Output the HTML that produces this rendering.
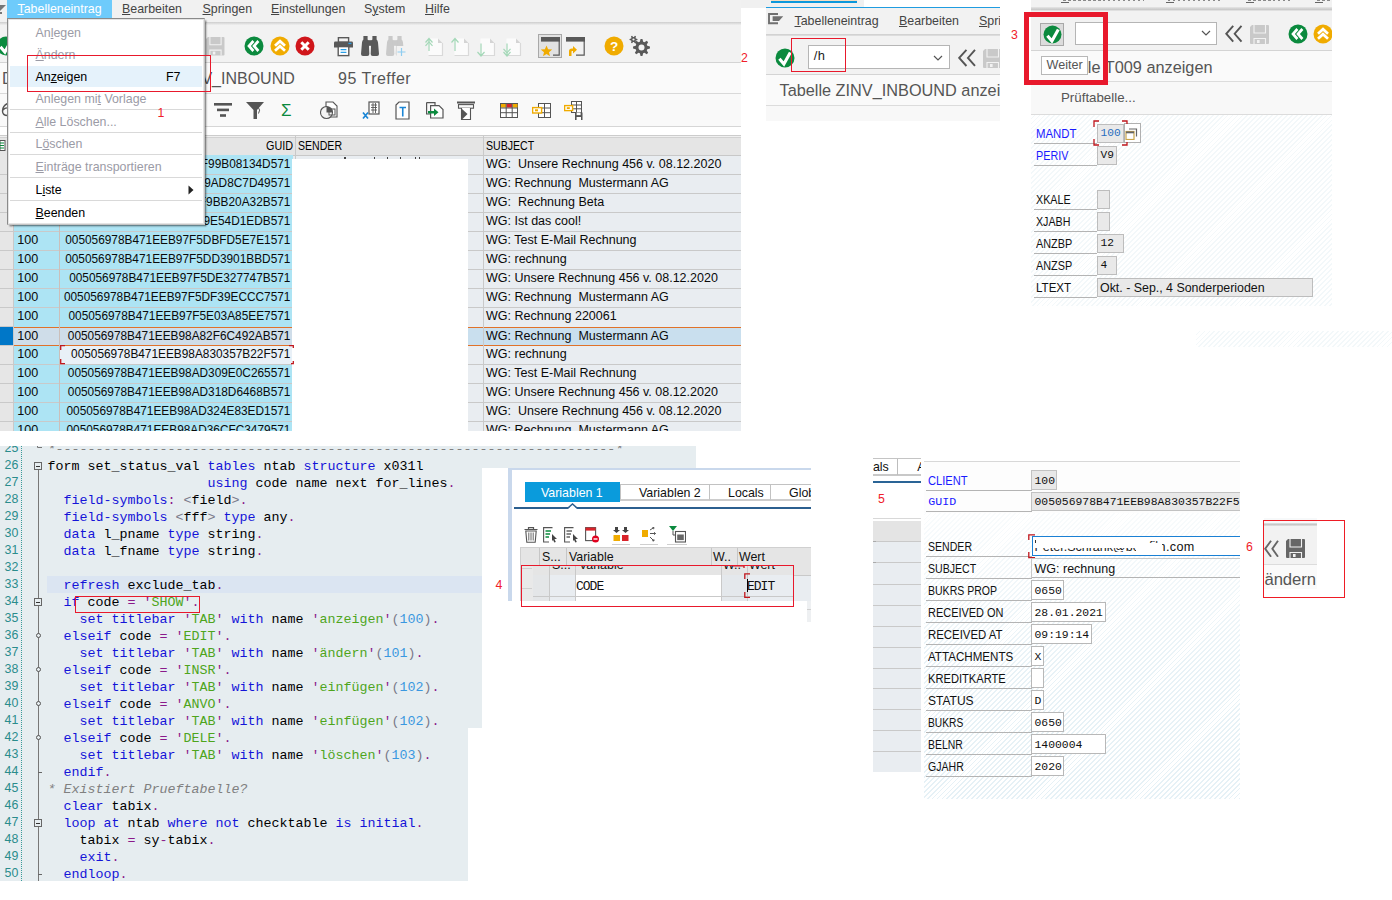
<!DOCTYPE html>
<html><head><meta charset="utf-8"><title>SAP</title>
<style>
html,body{margin:0;padding:0}
body{width:1392px;height:900px;position:relative;overflow:hidden;background:#fff;font-family:"Liberation Sans", sans-serif;}
div,span,svg{position:absolute}
.p{overflow:hidden}
.t{white-space:pre;display:block}
u{text-decoration:underline;text-underline-offset:1px;text-decoration-thickness:1px}
</style></head><body>
<div class="p" style="left:0px;top:0px;width:741px;height:431px;background:#f2f2f2;">
<div style="left:0px;top:0px;width:741px;height:22.2px;background:#f1f1f1;"></div>
<div style="left:0px;top:22.2px;width:741px;height:3px;background:linear-gradient(#cdcdcd,#dedede 50%,#efefef);"></div>
<div style="left:7px;top:0px;width:105px;height:18px;background:#6ecbfb;"></div>
<span class="t" style="left:17.5px;top:1.0px;font-size:12.4px;line-height:16px;color:#fff;"><u>T</u>abelleneintrag</span>
<span class="t" style="left:122px;top:1.0px;font-size:12.4px;line-height:16px;color:#444;"><u>B</u>earbeiten</span>
<span class="t" style="left:202.5px;top:1.0px;font-size:12.4px;line-height:16px;color:#444;"><u>S</u>pringen</span>
<span class="t" style="left:271px;top:1.0px;font-size:12.4px;line-height:16px;color:#444;"><u>E</u>instellungen</span>
<span class="t" style="left:364px;top:1.0px;font-size:12.4px;line-height:16px;color:#444;">S<u>y</u>stem</span>
<span class="t" style="left:425px;top:1.0px;font-size:12.4px;line-height:16px;color:#444;"><u>H</u>ilfe</span>
<svg style="left:0px;top:2px" width="7" height="12" viewBox="0 0 7 12"><path d="M0 3 H6 L0 9 Z" fill="#777"/><rect x="0" y="10" width="2" height="2" fill="#777"/></svg>
<div style="left:0px;top:25px;width:741px;height:37px;background:#f2f2f2;"></div>
<div style="left:0px;top:62px;width:741px;height:1px;background:#d4d4d4"></div>
<svg style="left:-4.0px;top:36.0px" width="20.0" height="20.0" viewBox="0 0 20.0 20.0"><circle cx="10.0" cy="10.0" r="9.5" fill="#0b8a3e"/><path d="M4.4 10.8 L8.9 16 L15.3 4.6" fill="none" stroke="#fff" stroke-width="3.1" stroke-linejoin="miter"/></svg>
<svg style="left:206.4px;top:37.3px" width="18.5" height="18.5" viewBox="0 0 18.5 18.5"><g transform="scale(0.9736842105263158)"><path d="M2 0 H18 Q19 0 19 1 V18 Q19 19 18 19 H1 Q0 19 0 18 V2 Z" fill="#c9c9c9"/><path d="M4 0 V8 H15.5 V0 M4 19 V13.5 H15.5 V19" fill="none" stroke="#f2f2f2" stroke-width="1.1"/><rect x="7" y="15" width="2.6" height="3" fill="#f2f2f2"/></g></svg>
<svg style="left:243.5px;top:36.0px" width="20.0" height="20.0" viewBox="0 0 20.0 20.0"><circle cx="10.0" cy="10.0" r="9.5" fill="#0b8a3e"/><path d="M9.4 5 L5 10 L9.4 15 M14.4 5 L10 10 L14.4 15" fill="none" stroke="#fff" stroke-width="2.7"/></svg>
<svg style="left:270.0px;top:36.0px" width="20.0" height="20.0" viewBox="0 0 20.0 20.0"><circle cx="10.0" cy="10.0" r="9.5" fill="#f0ab00"/><path d="M5 9.8 L10 5.2 L15 9.8 M5 14.8 L10 10.2 L15 14.8" fill="none" stroke="#fff" stroke-width="2.7"/></svg>
<svg style="left:295.3px;top:36.0px" width="20.0" height="20.0" viewBox="0 0 20.0 20.0"><circle cx="10.0" cy="10.0" r="9.5" fill="#d0161b"/><path d="M6.3 6.3 L13.7 13.7 M13.7 6.3 L6.3 13.7" fill="none" stroke="#fff" stroke-width="3"/></svg>
<svg style="left:334px;top:36.5px" width="19" height="20" viewBox="0 0 19 20"><rect x="4.4" y="0.7" width="10.2" height="4.6" fill="#f2f2f2" stroke="#595959" stroke-width="1.4"/><path d="M1.2 4.6 H17.8 Q19 4.6 19 5.8 V10.6 H0 V5.8 Q0 4.6 1.2 4.6 Z" fill="#595959"/><rect x="14.4" y="5.8" width="3" height="1.3" fill="#2aa0e8"/><rect x="4.2" y="9.6" width="10.6" height="9" fill="#fff" stroke="#595959" stroke-width="1.4"/><path d="M6.6 12.6 H12.4 M6.6 15.3 H12.4" stroke="#2aa0e8" stroke-width="1.2"/></svg>
<svg style="left:360.5px;top:36px" width="20" height="21" viewBox="0 0 20 21"><path d="M2.4 0 H6.6 V3.6 Q7.6 4.2 7.8 6 L8.3 18 Q8.3 20 6.3 20 H2 Q0 20 0 18 L1 6.5 Q1.2 4.4 2.4 3.6 Z" fill="#595959"/><path d="M15.6 0 H11.4 V3.6 Q10.4 4.2 10.2 6 L9.7 18 Q9.7 20 11.7 20 H16 Q18 20 18 18 L17 6.5 Q16.8 4.4 15.6 3.6 Z" fill="#595959"/><rect x="6.6" y="4.2" width="4.8" height="5.6" fill="#595959"/></svg>
<svg style="left:386px;top:36px" width="20" height="21" viewBox="0 0 20 21"><path d="M2.4 0 H6.6 V3.6 Q7.6 4.2 7.8 6 L8.3 18 Q8.3 20 6.3 20 H2 Q0 20 0 18 L1 6.5 Q1.2 4.4 2.4 3.6 Z" fill="#c9c9c9"/><path d="M15.6 0 H11.4 V3.6 Q10.4 4.2 10.2 6 L9.7 18 Q9.7 20 11.7 20 H16 Q18 20 18 18 L17 6.5 Q16.8 4.4 15.6 3.6 Z" fill="#c9c9c9"/><rect x="6.6" y="4.2" width="4.8" height="5.6" fill="#c9c9c9"/><rect x="10.5" y="10" width="10" height="11" fill="#f2f2f2"/><path d="M15.5 12 V20 M11.5 16 H19.5" stroke="#8fcdf0" stroke-width="1.2"/></svg>
<svg style="left:424.5px;top:36.5px" width="19" height="21" viewBox="0 0 19 21"><path d="M3.5 1.5 H13.0 L17.5 6 V18.5 H3.5 Z" fill="#fbfbfb"/><path d="M17.5 6 V18.5 H3.5" fill="none" stroke="#d9d9d9" stroke-width="1.2"/><path d="M13.0 1.5 L17.5 6 H13.0 Z" fill="#d4d4d4"/><path d="M4 14 V1.5 M0.5 5.5 L4 1.5 L7.5 5.5" fill="none" stroke="#a4d8b8" stroke-width="1.2"/><path d="M0.5 8.8 L4 4.8 L7.5 8.8" fill="none" stroke="#a4d8b8" stroke-width="1.2"/></svg>
<svg style="left:450.5px;top:36.5px" width="19" height="21" viewBox="0 0 19 21"><path d="M3.5 1.5 H13.0 L17.5 6 V18.5 H3.5 Z" fill="#fbfbfb"/><path d="M17.5 6 V18.5 H3.5" fill="none" stroke="#d9d9d9" stroke-width="1.2"/><path d="M13.0 1.5 L17.5 6 H13.0 Z" fill="#d4d4d4"/><path d="M4 14 V1.5 M0.5 5.5 L4 1.5 L7.5 5.5" fill="none" stroke="#a4d8b8" stroke-width="1.2"/></svg>
<svg style="left:476.5px;top:36.5px" width="19" height="21" viewBox="0 0 19 21"><path d="M3.5 1.5 H13.0 L17.5 6 V18.5 H3.5 Z" fill="#fbfbfb"/><path d="M17.5 6 V18.5 H3.5" fill="none" stroke="#d9d9d9" stroke-width="1.2"/><path d="M13.0 1.5 L17.5 6 H13.0 Z" fill="#d4d4d4"/><path d="M4 6.5 V19 M0.5 15 L4 19 L7.5 15" fill="none" stroke="#a4d8b8" stroke-width="1.2"/></svg>
<svg style="left:502.5px;top:36.5px" width="19" height="21" viewBox="0 0 19 21"><path d="M3.5 1.5 H13.0 L17.5 6 V18.5 H3.5 Z" fill="#fbfbfb"/><path d="M17.5 6 V18.5 H3.5" fill="none" stroke="#d9d9d9" stroke-width="1.2"/><path d="M13.0 1.5 L17.5 6 H13.0 Z" fill="#d4d4d4"/><path d="M4 6.5 V19 M0.5 15 L4 19 L7.5 15" fill="none" stroke="#a4d8b8" stroke-width="1.2"/><path d="M0.5 11.8 L4 15.8 L7.5 11.8" fill="none" stroke="#a4d8b8" stroke-width="1.2"/></svg>
<div style="left:538px;top:34px;width:24px;height:23.5px;background:#e2e2e2;border:1px solid #a8a8a8;box-sizing:border-box;"></div>
<svg style="left:540.5px;top:36.5px" width="19" height="19" viewBox="0 0 19 19"><path d="M0.8 0.8 H18.2 V18.2 H12" fill="none" stroke="#595959" stroke-width="1.2"/><rect x="0" y="0" width="19" height="4.6" fill="#595959"/><path d="M5.5 8.5 L7.1 12.3 L11.2 12.6 L8 15.2 L9 19.2 L5.5 17 L2 19.2 L3 15.2 L-0.2 12.6 L3.9 12.3 Z" fill="#f0ab00"/></svg>
<svg style="left:566px;top:36.5px" width="19" height="19" viewBox="0 0 19 19"><path d="M0.8 0.8 H18.2 V18.2 H10" fill="none" stroke="#595959" stroke-width="1.2"/><rect x="0" y="0" width="19" height="4.6" fill="#595959"/><path d="M3 19 V14 Q3 11.5 6 11.5 H7 V9 L11 12.8 L7 16.5 V14 H6 Q5.5 14 5.5 15 V19 Z" fill="#f0ab00"/></svg>
<svg style="left:604.0px;top:36.0px" width="20.0" height="20.0" viewBox="0 0 20.0 20.0"><circle cx="10.0" cy="10.0" r="9.5" fill="#f0ab00"/><text x="10" y="14.6" font-family="Liberation Sans" font-weight="bold" font-size="13.5" fill="#fff" text-anchor="middle">?</text></svg>
<svg style="left:629px;top:35px" width="22" height="22" viewBox="0 0 22 22"><path d="M20.95 11.57 L20.95 13.43 L18.26 14.17 L17.76 15.39 L19.13 17.81 L17.81 19.13 L15.39 17.76 L14.17 18.26 L13.43 20.95 L11.57 20.95 L10.83 18.26 L9.61 17.76 L7.19 19.13 L5.87 17.81 L7.24 15.39 L6.74 14.17 L4.05 13.43 L4.05 11.57 L6.74 10.83 L7.24 9.61 L5.87 7.19 L7.19 5.87 L9.61 7.24 L10.83 6.74 L11.57 4.05 L13.43 4.05 L14.17 6.74 L15.39 7.24 L17.81 5.87 L19.13 7.19 L17.76 9.61 L18.26 10.83Z" fill="#595959"/><circle cx="12.5" cy="12.5" r="3" fill="#f2f2f2"/><path d="M8.46 3.92 L8.46 5.08 L6.92 5.46 L6.54 6.11 L6.98 7.63 L5.97 8.22 L4.88 7.07 L4.12 7.07 L3.03 8.22 L2.02 7.63 L2.46 6.11 L2.08 5.46 L0.54 5.08 L0.54 3.92 L2.08 3.54 L2.46 2.89 L2.02 1.37 L3.03 0.78 L4.12 1.93 L4.88 1.93 L5.97 0.78 L6.98 1.37 L6.54 2.89 L6.92 3.54Z" fill="#595959"/><circle cx="4.5" cy="4.5" r="1.1" fill="#f2f2f2"/></svg>
<div style="left:0px;top:63px;width:741px;height:30px;background:#fafafa;"></div>
<div style="left:0px;top:93px;width:741px;height:1px;background:#d9d9d9"></div>
<span class="t" style="left:2px;top:69.0px;font-size:16px;line-height:20px;color:#555;">D</span>
<span class="t" style="left:201.4px;top:69.0px;font-size:16px;line-height:20px;color:#555;">V_INBOUND</span>
<span class="t" style="left:338px;top:69.0px;font-size:16px;line-height:20px;color:#555;letter-spacing:0.5px">95 Treffer</span>
<div style="left:0px;top:94px;width:741px;height:32px;background:#f9f9f9;"></div>
<div style="left:0px;top:126px;width:741px;height:1px;background:#d6d6d6"></div>
<div style="left:0px;top:127px;width:741px;height:9px;background:#fff;"></div>
<svg style="left:1px;top:102px" width="8" height="16" viewBox="0 0 8 16"><path d="M6.5 1.5 Q1.5 4 1.5 9 Q1.5 13.5 6.5 13.5 M2 8 Q4 5.5 7 6" fill="none" stroke="#555" stroke-width="1.4"/></svg>
<svg style="left:214px;top:102px" width="18" height="16" viewBox="0 0 18 16"><rect x="0" y="1" width="18" height="2.6" fill="#555"/><rect x="3" y="6.6" width="12" height="2.6" fill="#555"/><rect x="6" y="12.2" width="6" height="2.6" fill="#555"/></svg>
<svg style="left:246px;top:101px" width="19" height="19" viewBox="0 0 19 19"><path d="M0 1 H18 L11 9 V18 H7.5 V9 Z" fill="#555"/><path d="M12 6 Q15 9 12.5 12.5" fill="none" stroke="#555" stroke-width="1"/></svg>
<span class="t" style="left:281px;top:100.5px;font-size:17px;line-height:20px;color:#0b8a3e;">Σ</span>
<svg style="left:320px;top:101px" width="18" height="19" viewBox="0 0 18 19"><path d="M6 1 H13 L17 5 V16 H6 Z" fill="#fff" stroke="#555" stroke-width="1.1"/><circle cx="6.5" cy="11.5" r="6" fill="#f4f4f4" stroke="#555" stroke-width="1.1"/><path d="M6.5 11.5 V5.5 A6 6 0 0 1 12.5 11.5 Z" fill="#555"/><rect x="9" y="8" width="6" height="6" fill="none" stroke="#555" stroke-width="1"/></svg>
<svg style="left:362px;top:101px" width="18" height="19" viewBox="0 0 18 19"><rect x="7" y="1" width="10" height="12" fill="#fff" stroke="#555" stroke-width="1.2"/><path d="M9 4 H15 M9 6.5 H15 M9 9 H15 M11 2 V12 M13.5 2 V12" stroke="#555" stroke-width="0.9"/><path d="M1 11.5 L6 17.5 M6 11.5 L1 17.5" stroke="#1b86d6" stroke-width="1.7"/></svg>
<svg style="left:395px;top:101px" width="15" height="19" viewBox="0 0 15 19"><path d="M1 4 L4 1 H14 V18 H1 Z" fill="#fff" stroke="#555" stroke-width="1.2"/><path d="M4.5 6.5 H11 M7.75 6.5 V15.5" stroke="#1b86d6" stroke-width="1.6" fill="none"/></svg>
<svg style="left:426px;top:102px" width="18" height="17" viewBox="0 0 18 17"><path d="M0.6 0.6 H9 V3 M0.6 0.6 V12 H4" fill="none" stroke="#555" stroke-width="1.2"/><path d="M4.6 3.6 H13 L17 7.6 V16 H4.6 Z" fill="#fff" stroke="#555" stroke-width="1.2"/><path d="M2 9 H8 V6.5 L12.5 10.2 L8 14 V11.5 H2 Z" fill="#0b8a3e"/></svg>
<svg style="left:457px;top:101px" width="18" height="19" viewBox="0 0 18 19"><rect x="0" y="0.5" width="18" height="2" fill="#555"/><rect x="1.5" y="3.6" width="15" height="3.6" fill="none" stroke="#555" stroke-width="1.1"/><path d="M4.5 7 V18.5 H13.5 V7" fill="#fff" stroke="#555" stroke-width="1.1"/><path d="M5 8 L10.5 13 L5 18.5 Z" fill="#555"/></svg>
<svg style="left:500px;top:102.5px" width="18" height="15" viewBox="0 0 18 15"><rect x="0.5" y="0.5" width="17" height="14" fill="#fff" stroke="#555" stroke-width="1"/><rect x="1" y="1" width="5" height="3.6" fill="#f0ab00"/><rect x="6.5" y="1" width="5.5" height="3.6" fill="#d8232a"/><rect x="12.5" y="1" width="5" height="3.6" fill="#f0ab00"/><path d="M0.5 5 H17.5 M0.5 9.7 H17.5 M6.2 0.5 V14.5 M12.2 0.5 V14.5" stroke="#555" stroke-width="1"/></svg>
<svg style="left:532px;top:102.5px" width="19" height="15" viewBox="0 0 19 15"><rect x="6.5" y="0.5" width="12" height="14" fill="#fff" stroke="#555" stroke-width="1"/><path d="M6.5 5 H18.5 M6.5 9.7 H18.5 M12.5 0.5 V14.5" stroke="#555" stroke-width="1"/><rect x="0.6" y="4.6" width="9" height="5.4" fill="#fff" stroke="#f0ab00" stroke-width="1.4"/><rect x="3" y="6.3" width="3" height="2" fill="#f0ab00"/></svg>
<svg style="left:564px;top:101px" width="19" height="19" viewBox="0 0 19 19"><rect x="7.5" y="0.5" width="10" height="11" fill="#fff" stroke="#555" stroke-width="1"/><path d="M7.5 4 H17.5 M7.5 7.8 H17.5 M12.5 0.5 V11.5" stroke="#555" stroke-width="1"/><rect x="0.6" y="4.6" width="8" height="5" fill="#fff" stroke="#f0ab00" stroke-width="1.4"/><rect x="2.8" y="6.2" width="3" height="1.8" fill="#f0ab00"/><rect x="11" y="11.5" width="7.5" height="7.5" fill="#555"/><rect x="12.6" y="11.5" width="4" height="2.6" fill="#fff"/><rect x="12.6" y="16" width="4.4" height="3" fill="#fff"/></svg>
<div style="left:0px;top:136px;width:741px;height:295px;background:#e9edf1;"></div>
<div style="left:0px;top:135px;width:741px;height:20px;background:#e5e5e5;"></div>
<div style="left:0px;top:135px;width:741px;height:1px;background:#cccccc"></div>
<div style="left:0px;top:136px;width:741px;height:1px;background:#f0f0f0"></div>
<div style="left:0px;top:137px;width:741px;height:1px;background:#d2d2d2"></div>
<div style="left:0px;top:155px;width:741px;height:1px;background:#c8c8c8"></div>
<div style="left:0px;top:155px;width:14px;height:276px;background:#e6e6e6;"></div>
<div style="left:14px;top:155px;width:46px;height:276px;background:#ade4f4;"></div>
<div style="left:60px;top:155px;width:233px;height:276px;background:#ade4f4;"></div>
<div style="left:14px;top:327px;width:727px;height:18.5px;background:#c9dfee;"></div>
<div style="left:14px;top:327px;width:279px;height:18.5px;background:#cfdde9;"></div>
<div style="left:0px;top:327px;width:13px;height:18.5px;background:#0077c8;"></div>
<div style="left:60px;top:346px;width:233px;height:18px;background:#e9f0f7;"></div>
<div style="left:0px;top:174px;width:741px;height:1px;background:#c9c9c9"></div>
<div style="left:0px;top:193px;width:741px;height:1px;background:#c9c9c9"></div>
<div style="left:0px;top:212px;width:741px;height:1px;background:#c9c9c9"></div>
<div style="left:0px;top:231px;width:741px;height:1px;background:#c9c9c9"></div>
<div style="left:0px;top:250px;width:741px;height:1px;background:#c9c9c9"></div>
<div style="left:0px;top:269px;width:741px;height:1px;background:#c9c9c9"></div>
<div style="left:0px;top:288px;width:741px;height:1px;background:#c9c9c9"></div>
<div style="left:0px;top:307px;width:741px;height:1px;background:#c9c9c9"></div>
<div style="left:0px;top:364px;width:741px;height:1px;background:#c9c9c9"></div>
<div style="left:0px;top:383px;width:741px;height:1px;background:#c9c9c9"></div>
<div style="left:0px;top:402px;width:741px;height:1px;background:#c9c9c9"></div>
<div style="left:0px;top:421px;width:741px;height:1px;background:#c9c9c9"></div>
<div style="left:14px;top:326.8px;width:727px;height:1.1px;background:#e0722a"></div>
<div style="left:14px;top:344.8px;width:727px;height:1.1px;background:#e0722a"></div>
<div style="left:0px;top:326px;width:14px;height:1px;background:#c9c9c9"></div>
<div style="left:0px;top:345px;width:14px;height:1px;background:#c9c9c9"></div>
<div style="left:13px;top:136px;width:1px;height:295px;background:#c9c9c9"></div>
<div style="left:59.3px;top:136px;width:1px;height:295px;background:#cbbfba"></div>
<div style="left:294.5px;top:136px;width:1px;height:295px;background:#c9c9c9"></div>
<div style="left:482.5px;top:136px;width:1px;height:295px;background:#c9c9c9"></div>
<svg style="left:0px;top:140px" width="7" height="12" viewBox="0 0 7 12"><rect x="0" y="0.5" width="5" height="10" fill="#fff" stroke="#555" stroke-width="1"/><path d="M0 3 H4 M0 5.5 H4 M0 8 H4" stroke="#0b8a3e" stroke-width="1.2"/></svg>
<span class="t" style="left:265.5px;top:138.3px;font-size:12px;line-height:16px;color:#000;transform:scaleX(0.900);transform-origin:0 0;">GUID</span>
<span class="t" style="left:298px;top:138.3px;font-size:12px;line-height:16px;color:#000;transform:scaleX(0.880);transform-origin:0 0;">SENDER</span>
<span class="t" style="left:486px;top:138.3px;font-size:12px;line-height:16px;color:#000;transform:scaleX(0.882);transform-origin:0 0;">SUBJECT</span>
<span class="t" style="left:17.3px;top:156.4px;font-size:12.6px;line-height:16px;color:#0a0a0a;">100</span>
<span class="t" style="right:450.6px;top:156.4px;font-size:11.85px;line-height:16px;color:#0a0a0a;">005056978B471EEB97FF99B08134D571</span>
<span class="t" style="left:486px;top:156.4px;font-size:12.5px;line-height:16px;color:#0a0a0a;">WG:  Unsere Rechnung 456 v. 08.12.2020</span>
<span class="t" style="left:17.3px;top:175.4px;font-size:12.6px;line-height:16px;color:#0a0a0a;">100</span>
<span class="t" style="right:450.6px;top:175.4px;font-size:11.85px;line-height:16px;color:#0a0a0a;">005056978B471EEB97F59AD8C7D49571</span>
<span class="t" style="left:486px;top:175.4px;font-size:12.5px;line-height:16px;color:#0a0a0a;">WG: Rechnung  Mustermann AG</span>
<span class="t" style="left:17.3px;top:194.4px;font-size:12.6px;line-height:16px;color:#0a0a0a;">100</span>
<span class="t" style="right:450.6px;top:194.4px;font-size:11.85px;line-height:16px;color:#0a0a0a;">005056978B471EEB97FF9BB20A32B571</span>
<span class="t" style="left:486px;top:194.4px;font-size:12.5px;line-height:16px;color:#0a0a0a;">WG:  Rechnung Beta</span>
<span class="t" style="left:17.3px;top:213.4px;font-size:12.6px;line-height:16px;color:#0a0a0a;">100</span>
<span class="t" style="right:450.6px;top:213.4px;font-size:11.85px;line-height:16px;color:#0a0a0a;">005056978B471EEB97F59E54D1EDB571</span>
<span class="t" style="left:486px;top:213.4px;font-size:12.5px;line-height:16px;color:#0a0a0a;">WG: Ist das cool!</span>
<span class="t" style="left:17.3px;top:232.4px;font-size:12.6px;line-height:16px;color:#0a0a0a;">100</span>
<span class="t" style="right:450.6px;top:232.4px;font-size:11.85px;line-height:16px;color:#0a0a0a;">005056978B471EEB97F5DBFD5E7E1571</span>
<span class="t" style="left:486px;top:232.4px;font-size:12.5px;line-height:16px;color:#0a0a0a;">WG: Test E-Mail Rechnung</span>
<span class="t" style="left:17.3px;top:251.39999999999998px;font-size:12.6px;line-height:16px;color:#0a0a0a;">100</span>
<span class="t" style="right:450.6px;top:251.39999999999998px;font-size:11.85px;line-height:16px;color:#0a0a0a;">005056978B471EEB97F5DD3901BBD571</span>
<span class="t" style="left:486px;top:251.39999999999998px;font-size:12.5px;line-height:16px;color:#0a0a0a;">WG: rechnung</span>
<span class="t" style="left:17.3px;top:270.4px;font-size:12.6px;line-height:16px;color:#0a0a0a;">100</span>
<span class="t" style="right:450.6px;top:270.4px;font-size:11.85px;line-height:16px;color:#0a0a0a;">005056978B471EEB97F5DE327747B571</span>
<span class="t" style="left:486px;top:270.4px;font-size:12.5px;line-height:16px;color:#0a0a0a;">WG: Unsere Rechnung 456 v. 08.12.2020</span>
<span class="t" style="left:17.3px;top:289.4px;font-size:12.6px;line-height:16px;color:#0a0a0a;">100</span>
<span class="t" style="right:450.6px;top:289.4px;font-size:11.85px;line-height:16px;color:#0a0a0a;">005056978B471EEB97F5DF39ECCC7571</span>
<span class="t" style="left:486px;top:289.4px;font-size:12.5px;line-height:16px;color:#0a0a0a;">WG: Rechnung  Mustermann AG</span>
<span class="t" style="left:17.3px;top:308.4px;font-size:12.6px;line-height:16px;color:#0a0a0a;">100</span>
<span class="t" style="right:450.6px;top:308.4px;font-size:11.85px;line-height:16px;color:#0a0a0a;">005056978B471EEB97F5E03A85EE7571</span>
<span class="t" style="left:486px;top:308.4px;font-size:12.5px;line-height:16px;color:#0a0a0a;">WG: Rechnung 220061</span>
<span class="t" style="left:17.3px;top:328.0px;font-size:12.6px;line-height:16px;color:#0a0a0a;">100</span>
<span class="t" style="right:450.6px;top:328.0px;font-size:11.85px;line-height:16px;color:#0a0a0a;">005056978B471EEB98A82F6C492AB571</span>
<span class="t" style="left:486px;top:328.0px;font-size:12.5px;line-height:16px;color:#0a0a0a;">WG: Rechnung  Mustermann AG</span>
<span class="t" style="left:17.3px;top:346.4px;font-size:12.6px;line-height:16px;color:#0a0a0a;">100</span>
<span class="t" style="right:450.6px;top:346.4px;font-size:11.85px;line-height:16px;color:#0a0a0a;">005056978B471EEB98A830357B22F571</span>
<span class="t" style="left:486px;top:346.4px;font-size:12.5px;line-height:16px;color:#0a0a0a;">WG: rechnung</span>
<span class="t" style="left:17.3px;top:365.4px;font-size:12.6px;line-height:16px;color:#0a0a0a;">100</span>
<span class="t" style="right:450.6px;top:365.4px;font-size:11.85px;line-height:16px;color:#0a0a0a;">005056978B471EEB98AD309E0C265571</span>
<span class="t" style="left:486px;top:365.4px;font-size:12.5px;line-height:16px;color:#0a0a0a;">WG: Test E-Mail Rechnung</span>
<span class="t" style="left:17.3px;top:384.4px;font-size:12.6px;line-height:16px;color:#0a0a0a;">100</span>
<span class="t" style="right:450.6px;top:384.4px;font-size:11.85px;line-height:16px;color:#0a0a0a;">005056978B471EEB98AD318D6468B571</span>
<span class="t" style="left:486px;top:384.4px;font-size:12.5px;line-height:16px;color:#0a0a0a;">WG: Unsere Rechnung 456 v. 08.12.2020</span>
<span class="t" style="left:17.3px;top:403.4px;font-size:12.6px;line-height:16px;color:#0a0a0a;">100</span>
<span class="t" style="right:450.6px;top:403.4px;font-size:11.85px;line-height:16px;color:#0a0a0a;">005056978B471EEB98AD324E83ED1571</span>
<span class="t" style="left:486px;top:403.4px;font-size:12.5px;line-height:16px;color:#0a0a0a;">WG:  Unsere Rechnung 456 v. 08.12.2020</span>
<span class="t" style="left:17.3px;top:422.4px;font-size:12.6px;line-height:16px;color:#0a0a0a;">100</span>
<span class="t" style="right:450.6px;top:422.4px;font-size:11.85px;line-height:16px;color:#0a0a0a;">005056978B471EEB98AD36CFC3479571</span>
<span class="t" style="left:486px;top:422.4px;font-size:12.5px;line-height:16px;color:#0a0a0a;">WG: Rechnung  Mustermann AG</span>
<div style="left:292px;top:159px;width:176px;height:272px;background:#fff;"></div>
<div style="left:344.4px;top:157.2px;width:1.2px;height:1.8px;background:#444;"></div>
<div style="left:373.7px;top:157.2px;width:1.2px;height:1.8px;background:#444;"></div>
<div style="left:387px;top:157.2px;width:1.2px;height:1.8px;background:#444;"></div>
<div style="left:400px;top:157.2px;width:1.2px;height:1.8px;background:#444;"></div>
<div style="left:415px;top:157.2px;width:1.2px;height:1.8px;background:#444;"></div>
<div style="left:419px;top:157.2px;width:1.2px;height:1.8px;background:#444;"></div>
<svg style="left:60px;top:345px" width="234" height="20" viewBox="0 0 234 20"><path d="M0.7 5 V0.7 H5 M0.7 14 V18.6 H5 M229 0.7 H233.3 V3 M233.3 16 V18.6 H231" fill="none" stroke="#c0161c" stroke-width="1.3"/></svg>
<div style="left:7px;top:18.2px;width:197.6px;height:206.6px;background:#fff;border:1px solid #8a8a8a;border-right-color:#c4c4c4;border-bottom-color:#c4c4c4;box-sizing:border-box;box-shadow:2.2px 2.2px 1.6px rgba(0,0,0,.42)"></div>
<div style="left:8px;top:19.2px;width:195.6px;height:204.6px;border:1px solid #e4e4e4;box-sizing:border-box;"></div>
<div style="left:10px;top:65.5px;width:192px;height:21px;background:#e5f2fb;"></div>
<span class="t" style="left:35.5px;top:24.5px;font-size:12.4px;line-height:16px;color:#9b9ba6;">An<u>l</u>egen</span>
<span class="t" style="left:35.5px;top:46.5px;font-size:12.4px;line-height:16px;color:#9b9ba6;"><u>Ä</u>ndern</span>
<span class="t" style="left:35.5px;top:68.5px;font-size:12.4px;line-height:16px;color:#000;">An<u>z</u>eigen</span>
<span class="t" style="left:166px;top:68.5px;font-size:12.4px;line-height:16px;color:#000;">F7</span>
<span class="t" style="left:35.5px;top:90.5px;font-size:12.4px;line-height:16px;color:#9b9ba6;">Anlegen mi<u>t</u> Vorlage</span>
<span class="t" style="left:35.5px;top:113.5px;font-size:12.4px;line-height:16px;color:#9b9ba6;"><u>A</u>lle Löschen...</span>
<span class="t" style="left:35.5px;top:135.5px;font-size:12.4px;line-height:16px;color:#9b9ba6;">L<u>ö</u>schen</span>
<span class="t" style="left:35.5px;top:158.5px;font-size:12.4px;line-height:16px;color:#9b9ba6;"><u>E</u>inträge transportieren</span>
<span class="t" style="left:35.5px;top:181.5px;font-size:12.4px;line-height:16px;color:#000;">L<u>i</u>ste</span>
<span class="t" style="left:35.5px;top:204.5px;font-size:12.4px;line-height:16px;color:#000;"><u>B</u>eenden</span>
<div style="left:10px;top:109px;width:192px;height:1px;background:#d9d9d9"></div>
<div style="left:10px;top:132px;width:192px;height:1px;background:#d9d9d9"></div>
<div style="left:10px;top:154px;width:192px;height:1px;background:#d9d9d9"></div>
<div style="left:10px;top:177px;width:192px;height:1px;background:#d9d9d9"></div>
<div style="left:10px;top:200px;width:192px;height:1px;background:#d9d9d9"></div>
<svg style="left:188px;top:185px" width="6" height="10" viewBox="0 0 6 10"><path d="M0.5 0.5 L5.5 5 L0.5 9.5 Z" fill="#222"/></svg>
<div style="left:27px;top:54.8px;width:184.3px;height:37.6px;border:1px solid #e8192c;box-sizing:border-box;"></div>
<span class="t" style="left:157.5px;top:104.5px;font-size:12.3px;line-height:16px;color:#f0202a;">1</span>
</div>
<span class="t" style="left:741px;top:50.0px;font-size:12.3px;line-height:16px;color:#f0202a;">2</span>
<div style="left:741px;top:0px;width:26px;height:7.5px;background:#f0f0f0;"></div>
<div class="p" style="left:766px;top:0px;width:234px;height:120.5px;background:#fafafa;">
<div style="left:0px;top:0px;width:234px;height:7.2px;background:#fff;"></div>
<div style="left:0px;top:0px;width:98px;height:7.5px;background:#f0f0f0;"></div>
<div style="left:4.8px;top:0px;width:86.2px;height:0.9px;background:#f3dcc0;"></div>
<div style="left:4.8px;top:0.8px;width:86.2px;height:2.4px;background:#0a97db;"></div>
<div style="left:0px;top:7.1px;width:234px;height:1px;background:#1f9ce0"></div>
<div style="left:0px;top:8.1px;width:234px;height:25.7px;background:#f2f2f2;"></div>
<div style="left:0px;top:33.7px;width:234px;height:3px;background:linear-gradient(#cdcdcd,#dcdcdc 50%,#eeeeee);"></div>
<svg style="left:2px;top:13px" width="16" height="12" viewBox="0 0 16 12"><path d="M10 1 H1 V10.2 H10" fill="none" stroke="#707070" stroke-width="1.9"/><path d="M4.6 3.2 H15.2 L11 8 H4.6 Z" fill="#707070"/></svg>
<span class="t" style="left:28.5px;top:12.5px;font-size:12.4px;line-height:16px;color:#444;"><u>T</u>abelleneintrag</span>
<span class="t" style="left:133px;top:12.5px;font-size:12.4px;line-height:16px;color:#444;"><u>B</u>earbeiten</span>
<span class="t" style="left:213px;top:12.5px;font-size:12.4px;line-height:16px;color:#444;"><u>S</u>pringen</span>
<div style="left:0px;top:36px;width:234px;height:38px;background:#f2f2f2;"></div>
<div style="left:0px;top:74px;width:234px;height:1px;background:#d4d4d4"></div>
<svg style="left:8.600000000000001px;top:47.9px" width="20.0" height="20.0" viewBox="0 0 20.0 20.0"><circle cx="10.0" cy="10.0" r="9.5" fill="#0b8a3e"/><path d="M4.4 10.8 L8.9 16 L15.3 4.6" fill="none" stroke="#fff" stroke-width="3.1" stroke-linejoin="miter"/></svg>
<div style="left:42px;top:45px;width:142px;height:23.6px;background:#fff;border:1px solid #b5b5b5;box-sizing:border-box;"></div>
<span class="t" style="left:47.8px;top:47.3px;font-size:12.9px;line-height:18px;color:#222;letter-spacing:0.4px">/h</span>
<svg style="left:167px;top:54.5px" width="10" height="6" viewBox="0 0 10 6"><path d="M1 1 L5 5 L9 1" fill="none" stroke="#555" stroke-width="1.2"/></svg>
<svg style="left:192px;top:49.3px" width="18" height="17.8" viewBox="0 0 18 17.8"><path d="M8.459999999999999 0.8 L1.2 8.9 L8.459999999999999 17.0 M17 0.8 L9.940000000000001 8.9 L17 17.0" fill="none" stroke="#555" stroke-width="1.9"/></svg>
<svg style="left:217px;top:49px" width="19" height="19" viewBox="0 0 19 19"><g transform="scale(1.0)"><path d="M2 0 H18 Q19 0 19 1 V18 Q19 19 18 19 H1 Q0 19 0 18 V2 Z" fill="#c9c9c9"/><path d="M4 0 V8 H15.5 V0 M4 19 V13.5 H15.5 V19" fill="none" stroke="#f2f2f2" stroke-width="1.1"/><rect x="7" y="15" width="2.6" height="3" fill="#f2f2f2"/></g></svg>
<div style="left:0px;top:75px;width:234px;height:30px;background:#fafafa;"></div>
<div style="left:0px;top:105px;width:234px;height:1px;background:#dcdcdc"></div>
<span class="t" style="left:13.5px;top:79.8px;font-size:16.3px;line-height:20px;color:#555;">Tabelle ZINV_INBOUND anzeigen</span>
<div style="left:0px;top:106px;width:234px;height:15px;background:#f8f8f8;"></div>
<div style="left:25px;top:38px;width:54.5px;height:33.5px;border:1px solid #e8192c;box-sizing:border-box;"></div>
</div>
<span class="t" style="left:1011px;top:26.5px;font-size:12.3px;line-height:16px;color:#f0202a;">3</span>
<div class="p" style="left:1031px;top:0px;width:301px;height:305.5px;background:#fafafa;">
<div style="left:0px;top:0px;width:301px;height:8px;background:#f2f2f2;"></div>
<div style="left:0px;top:7px;width:301px;height:4px;background:linear-gradient(#e6e6e6,#c8c8c8 60%,#ebebeb);"></div>
<div style="left:32px;top:0;width:80.5px;height:1.4px;background:repeating-linear-gradient(90deg,#8a8a8a 0,#8a8a8a 2.5px,transparent 2.5px,transparent 5px)"></div>
<div style="left:30px;top:1.8px;width:7.5px;height:1px;background:#666"></div>
<div style="left:137px;top:0;width:55px;height:1.4px;background:repeating-linear-gradient(90deg,#8a8a8a 0,#8a8a8a 2.5px,transparent 2.5px,transparent 5px)"></div>
<div style="left:135px;top:1.8px;width:7.5px;height:1px;background:#666"></div>
<div style="left:217px;top:0;width:44px;height:1.4px;background:repeating-linear-gradient(90deg,#8a8a8a 0,#8a8a8a 2.5px,transparent 2.5px,transparent 5px)"></div>
<div style="left:215px;top:1.8px;width:7.5px;height:1px;background:#666"></div>
<div style="left:286px;top:0;width:14px;height:1.4px;background:repeating-linear-gradient(90deg,#8a8a8a 0,#8a8a8a 2.5px,transparent 2.5px,transparent 5px)"></div>
<div style="left:284px;top:1.8px;width:7.5px;height:1px;background:#666"></div>
<div style="left:0px;top:11px;width:301px;height:39px;background:#f2f2f2;"></div>
<div style="left:0px;top:50px;width:301px;height:1px;background:#d4d4d4"></div>
<div style="left:9px;top:22.5px;width:24px;height:23px;background:#dcdcdc;border:1px solid #a8a8a8;box-sizing:border-box;"></div>
<svg style="left:11.5px;top:24.5px" width="19" height="19" viewBox="0 0 19 19"><circle cx="9.5" cy="9.5" r="9" fill="#0b8a3e"/><path d="M4.4 10.8 L8.9 16 L15.3 4.6" fill="none" stroke="#fff" stroke-width="3.1" stroke-linejoin="miter"/></svg>
<div style="left:44px;top:21.5px;width:141.5px;height:23px;background:#fff;border:1px solid #b5b5b5;box-sizing:border-box;"></div>
<svg style="left:169.5px;top:30px" width="10" height="6" viewBox="0 0 10 6"><path d="M1 1 L5 5 L9 1" fill="none" stroke="#555" stroke-width="1.2"/></svg>
<svg style="left:194px;top:25px" width="17.5" height="17.5" viewBox="0 0 17.5 17.5"><path d="M8.225 0.8 L1.2 8.75 L8.225 16.7 M16.5 0.8 L9.675 8.75 L16.5 16.7" fill="none" stroke="#555" stroke-width="1.9"/></svg>
<svg style="left:219px;top:25px" width="19" height="19" viewBox="0 0 19 19"><g transform="scale(1.0)"><path d="M2 0 H18 Q19 0 19 1 V18 Q19 19 18 19 H1 Q0 19 0 18 V2 Z" fill="#c9c9c9"/><path d="M4 0 V8 H15.5 V0 M4 19 V13.5 H15.5 V19" fill="none" stroke="#f2f2f2" stroke-width="1.1"/><rect x="7" y="15" width="2.6" height="3" fill="#f2f2f2"/></g></svg>
<svg style="left:256.5px;top:24.0px" width="20.0" height="20.0" viewBox="0 0 20.0 20.0"><circle cx="10.0" cy="10.0" r="9.5" fill="#0b8a3e"/><path d="M9.4 5 L5 10 L9.4 15 M14.4 5 L10 10 L14.4 15" fill="none" stroke="#fff" stroke-width="2.7"/></svg>
<svg style="left:282.0px;top:24.0px" width="20.0" height="20.0" viewBox="0 0 20.0 20.0"><circle cx="10.0" cy="10.0" r="9.5" fill="#f0ab00"/><path d="M5 9.8 L10 5.2 L15 9.8 M5 14.8 L10 10.2 L15 14.8" fill="none" stroke="#fff" stroke-width="2.7"/></svg>
<div style="left:0px;top:51px;width:301px;height:30px;background:#fafafa;"></div>
<div style="left:0px;top:81px;width:301px;height:1px;background:#dcdcdc"></div>
<span class="t" style="right:119.5px;top:57.2px;font-size:16.3px;line-height:20px;color:#555;">Tabelle T009 anzeigen</span>
<div style="left:10px;top:55.5px;width:47px;height:19px;background:#fff;border:1px solid #b8b8b8;box-sizing:border-box;"></div>
<span class="t" style="left:15.5px;top:57.0px;font-size:12.6px;line-height:16px;color:#555;">Weiter</span>
<div style="left:0px;top:82px;width:301px;height:32px;background:#f8f8f8;"></div>
<div style="left:0px;top:114px;width:301px;height:1px;background:#dcdcdc"></div>
<span class="t" style="left:30px;top:89.0px;font-size:13.3px;line-height:18px;color:#555;">Prüftabelle...</span>
<div style="left:0px;top:115px;width:301px;height:190.5px;background:repeating-linear-gradient(135deg,#ffffff 0,#ffffff 2.2px,#f3f8fa 2.2px,#f3f8fa 3.5px);"></div>
<span class="t" style="left:5px;top:125.5px;font-size:12.2px;line-height:16px;color:#1a1aff;transform:scaleX(0.934);transform-origin:0 0;">MANDT</span>
<div style="left:3px;top:142.5px;width:63px;height:1px;background:#b4b4b4"></div>
<div style="left:66px;top:124.0px;width:26.5px;height:19px;background:#e9e9e9;border:1px solid #bdbdbd;box-sizing:border-box;"></div>
<span class="t" style="left:69.5px;top:125.19999999999999px;font-size:11.2px;line-height:16px;color:#2a6fc0;font-family:'Liberation Mono', monospace;">100</span>
<span class="t" style="left:5px;top:147.5px;font-size:12.2px;line-height:16px;color:#1a1aff;transform:scaleX(0.885);transform-origin:0 0;">PERIV</span>
<div style="left:3px;top:164.5px;width:63px;height:1px;background:#b4b4b4"></div>
<div style="left:66px;top:146.0px;width:19.5px;height:19px;background:#e9e9e9;border:1px solid #bdbdbd;box-sizing:border-box;"></div>
<span class="t" style="left:69.5px;top:147.2px;font-size:11.2px;line-height:16px;color:#111;font-family:'Liberation Mono', monospace;">V9</span>
<span class="t" style="left:5px;top:191.5px;font-size:12.2px;line-height:16px;color:#111;transform:scaleX(0.880);transform-origin:0 0;">XKALE</span>
<div style="left:3px;top:208.5px;width:63px;height:1px;background:#b4b4b4"></div>
<div style="left:66px;top:190.0px;width:12.5px;height:19px;background:#e9e9e9;border:1px solid #bdbdbd;box-sizing:border-box;"></div>
<span class="t" style="left:5px;top:213.5px;font-size:12.2px;line-height:16px;color:#111;transform:scaleX(0.875);transform-origin:0 0;">XJABH</span>
<div style="left:3px;top:230.5px;width:63px;height:1px;background:#b4b4b4"></div>
<div style="left:66px;top:212.0px;width:12.5px;height:19px;background:#e9e9e9;border:1px solid #bdbdbd;box-sizing:border-box;"></div>
<span class="t" style="left:5px;top:235.5px;font-size:12.2px;line-height:16px;color:#111;transform:scaleX(0.892);transform-origin:0 0;">ANZBP</span>
<div style="left:3px;top:252.5px;width:63px;height:1px;background:#b4b4b4"></div>
<div style="left:66px;top:234.0px;width:26.5px;height:19px;background:#e9e9e9;border:1px solid #bdbdbd;box-sizing:border-box;"></div>
<span class="t" style="left:69.5px;top:235.2px;font-size:11.2px;line-height:16px;color:#111;font-family:'Liberation Mono', monospace;">12</span>
<span class="t" style="left:5px;top:257.5px;font-size:12.2px;line-height:16px;color:#111;transform:scaleX(0.892);transform-origin:0 0;">ANZSP</span>
<div style="left:3px;top:274.5px;width:63px;height:1px;background:#b4b4b4"></div>
<div style="left:66px;top:256.0px;width:19.5px;height:19px;background:#e9e9e9;border:1px solid #bdbdbd;box-sizing:border-box;"></div>
<span class="t" style="left:69.5px;top:257.2px;font-size:11.2px;line-height:16px;color:#111;font-family:'Liberation Mono', monospace;">4</span>
<span class="t" style="left:5px;top:279.5px;font-size:12.2px;line-height:16px;color:#111;transform:scaleX(0.950);transform-origin:0 0;">LTEXT</span>
<div style="left:3px;top:296.5px;width:63px;height:1px;background:#b4b4b4"></div>
<div style="left:66px;top:278.0px;width:215.5px;height:19px;background:#e9e9e9;border:1px solid #bdbdbd;box-sizing:border-box;"></div>
<span class="t" style="left:69px;top:279.5px;font-size:12.4px;line-height:16px;color:#111;">Okt. - Sep., 4 Sonderperioden</span>
<div style="left:93px;top:123px;width:17px;height:19.5px;background:#fff;border:1px solid #b0b0b0;box-sizing:border-box;"></div>
<svg style="left:94px;top:126px" width="14" height="14" viewBox="0 0 14 14"><path d="M4 3 H11.5 V10.5" fill="none" stroke="#666" stroke-width="1.2"/><rect x="1" y="5.5" width="8" height="8" fill="#fff" stroke="#caa64a" stroke-width="1.2"/><rect x="1" y="5.5" width="8" height="1.8" fill="#666"/></svg>
<svg style="left:62px;top:120px" width="36" height="26" viewBox="0 0 36 26"><path d="M1 7 V1 H6 M1 19 V25 H6 M29 1 H34 V4 M34 22 V25 H29" fill="none" stroke="#c0161c" stroke-width="1.3"/></svg>
<div style="left:-7px;top:12px;width:84px;height:72.5px;border:5px solid #e8192c;box-sizing:border-box;"></div>
</div>
<div style="left:1024px;top:12px;width:10px;height:72.5px;border:5px solid #e8192c;box-sizing:border-box;border-right:none;"></div>
<div style="left:1196px;top:331px;width:196px;height:16px;background:repeating-linear-gradient(135deg,#ffffff 0,#ffffff 2.2px,#f3f8fa 2.2px,#f3f8fa 3.5px);"></div>
<div style="left:0px;top:446px;width:695.5px;height:22px;background:#e6edf0;"></div>
<div style="left:0px;top:468px;width:482px;height:260px;background:#e6edf0;"></div>
<div style="left:0px;top:728px;width:468px;height:152.5px;background:#e6edf0;"></div>
<div class="p" style="left:0px;top:446px;width:695.5px;height:434.5px;background:transparent;">
<div style="left:47px;top:130px;width:435px;height:16.5px;background:#dbe5f2;"></div>
<div style="left:20.8px;top:0;width:0;height:435px;border-left:1px dotted #3a9a9a"></div>
<div style="left:37.5px;top:23.5px;width:1px;height:412.0px;background:#777"></div>
<span class="t" style="left:4.5px;top:-6.0px;font-size:12.4px;line-height:17px;color:#2a8c8c;">25</span>
<span class="t" style="left:47.5px;top:-5.5px;font-size:13.33px;line-height:17px;color:#000;font-family:'Liberation Mono', monospace;"><i style="color:#808080">*----------------------------------------------------------------------*</i></span>
<span class="t" style="left:4.5px;top:11.0px;font-size:12.4px;line-height:17px;color:#2a8c8c;">26</span>
<span class="t" style="left:47.5px;top:11.5px;font-size:13.33px;line-height:17px;color:#000;font-family:'Liberation Mono', monospace;">form set_status_val <span style="color:#1414d8;position:static">tables</span> ntab <span style="color:#1414d8;position:static">structure</span> x031l</span>
<span class="t" style="left:4.5px;top:28.0px;font-size:12.4px;line-height:17px;color:#2a8c8c;">27</span>
<span class="t" style="left:47.5px;top:28.5px;font-size:13.33px;line-height:17px;color:#000;font-family:'Liberation Mono', monospace;">                    <span style="color:#1414d8;position:static">using</span> code name next for_lines<span style="color:#8a1a8a;position:static">.</span></span>
<span class="t" style="left:4.5px;top:45.0px;font-size:12.4px;line-height:17px;color:#2a8c8c;">28</span>
<span class="t" style="left:47.5px;top:45.5px;font-size:13.33px;line-height:17px;color:#000;font-family:'Liberation Mono', monospace;">  <span style="color:#1414d8;position:static">field-symbols</span><span style="color:#8a1a8a;position:static">:</span> <span style="color:#7a7a8a;position:static">&lt;</span>field<span style="color:#7a7a8a;position:static">&gt;</span><span style="color:#8a1a8a;position:static">.</span></span>
<span class="t" style="left:4.5px;top:62.0px;font-size:12.4px;line-height:17px;color:#2a8c8c;">29</span>
<span class="t" style="left:47.5px;top:62.5px;font-size:13.33px;line-height:17px;color:#000;font-family:'Liberation Mono', monospace;">  <span style="color:#1414d8;position:static">field-symbols</span> <span style="color:#7a7a8a;position:static">&lt;</span>fff<span style="color:#7a7a8a;position:static">&gt;</span> <span style="color:#1414d8;position:static">type</span> any<span style="color:#8a1a8a;position:static">.</span></span>
<span class="t" style="left:4.5px;top:79.0px;font-size:12.4px;line-height:17px;color:#2a8c8c;">30</span>
<span class="t" style="left:47.5px;top:79.5px;font-size:13.33px;line-height:17px;color:#000;font-family:'Liberation Mono', monospace;">  <span style="color:#1414d8;position:static">data</span> l_pname <span style="color:#1414d8;position:static">type</span> string<span style="color:#8a1a8a;position:static">.</span></span>
<span class="t" style="left:4.5px;top:96.0px;font-size:12.4px;line-height:17px;color:#2a8c8c;">31</span>
<span class="t" style="left:47.5px;top:96.5px;font-size:13.33px;line-height:17px;color:#000;font-family:'Liberation Mono', monospace;">  <span style="color:#1414d8;position:static">data</span> l_fname <span style="color:#1414d8;position:static">type</span> string<span style="color:#8a1a8a;position:static">.</span></span>
<span class="t" style="left:4.5px;top:113.0px;font-size:12.4px;line-height:17px;color:#2a8c8c;">32</span>
<span class="t" style="left:4.5px;top:130.0px;font-size:12.4px;line-height:17px;color:#2a8c8c;">33</span>
<span class="t" style="left:47.5px;top:130.5px;font-size:13.33px;line-height:17px;color:#000;font-family:'Liberation Mono', monospace;">  <span style="color:#1414d8;position:static">refresh</span> exclude_tab<span style="color:#8a1a8a;position:static">.</span></span>
<span class="t" style="left:4.5px;top:147.0px;font-size:12.4px;line-height:17px;color:#2a8c8c;">34</span>
<span class="t" style="left:47.5px;top:147.5px;font-size:13.33px;line-height:17px;color:#000;font-family:'Liberation Mono', monospace;">  <span style="color:#1414d8;position:static">if</span> code <span style="color:#8a1a8a;position:static">=</span> <span style="color:#8a1a8a;position:static">'</span><span style="color:#4ea51c;position:static">SHOW</span><span style="color:#8a1a8a;position:static">'</span><span style="color:#8a1a8a;position:static">.</span></span>
<span class="t" style="left:4.5px;top:164.0px;font-size:12.4px;line-height:17px;color:#2a8c8c;">35</span>
<span class="t" style="left:47.5px;top:164.5px;font-size:13.33px;line-height:17px;color:#000;font-family:'Liberation Mono', monospace;">    <span style="color:#1414d8;position:static">set</span> <span style="color:#1414d8;position:static">titlebar</span> <span style="color:#8a1a8a;position:static">'</span><span style="color:#4ea51c;position:static">TAB</span><span style="color:#8a1a8a;position:static">'</span> <span style="color:#1414d8;position:static">with</span> name <span style="color:#8a1a8a;position:static">'</span><span style="color:#4ea51c;position:static">anzeigen</span><span style="color:#8a1a8a;position:static">'</span><span style="color:#7a7a8a;position:static">(</span><span style="color:#3a98e0;position:static">100</span><span style="color:#7a7a8a;position:static">)</span><span style="color:#8a1a8a;position:static">.</span></span>
<span class="t" style="left:4.5px;top:181.0px;font-size:12.4px;line-height:17px;color:#2a8c8c;">36</span>
<span class="t" style="left:47.5px;top:181.5px;font-size:13.33px;line-height:17px;color:#000;font-family:'Liberation Mono', monospace;">  <span style="color:#1414d8;position:static">elseif</span> code <span style="color:#8a1a8a;position:static">=</span> <span style="color:#8a1a8a;position:static">'</span><span style="color:#4ea51c;position:static">EDIT</span><span style="color:#8a1a8a;position:static">'</span><span style="color:#8a1a8a;position:static">.</span></span>
<span class="t" style="left:4.5px;top:198.0px;font-size:12.4px;line-height:17px;color:#2a8c8c;">37</span>
<span class="t" style="left:47.5px;top:198.5px;font-size:13.33px;line-height:17px;color:#000;font-family:'Liberation Mono', monospace;">    <span style="color:#1414d8;position:static">set</span> <span style="color:#1414d8;position:static">titlebar</span> <span style="color:#8a1a8a;position:static">'</span><span style="color:#4ea51c;position:static">TAB</span><span style="color:#8a1a8a;position:static">'</span> <span style="color:#1414d8;position:static">with</span> name <span style="color:#8a1a8a;position:static">'</span><span style="color:#4ea51c;position:static">ändern</span><span style="color:#8a1a8a;position:static">'</span><span style="color:#7a7a8a;position:static">(</span><span style="color:#3a98e0;position:static">101</span><span style="color:#7a7a8a;position:static">)</span><span style="color:#8a1a8a;position:static">.</span></span>
<span class="t" style="left:4.5px;top:215.0px;font-size:12.4px;line-height:17px;color:#2a8c8c;">38</span>
<span class="t" style="left:47.5px;top:215.5px;font-size:13.33px;line-height:17px;color:#000;font-family:'Liberation Mono', monospace;">  <span style="color:#1414d8;position:static">elseif</span> code <span style="color:#8a1a8a;position:static">=</span> <span style="color:#8a1a8a;position:static">'</span><span style="color:#4ea51c;position:static">INSR</span><span style="color:#8a1a8a;position:static">'</span><span style="color:#8a1a8a;position:static">.</span></span>
<span class="t" style="left:4.5px;top:232.0px;font-size:12.4px;line-height:17px;color:#2a8c8c;">39</span>
<span class="t" style="left:47.5px;top:232.5px;font-size:13.33px;line-height:17px;color:#000;font-family:'Liberation Mono', monospace;">    <span style="color:#1414d8;position:static">set</span> <span style="color:#1414d8;position:static">titlebar</span> <span style="color:#8a1a8a;position:static">'</span><span style="color:#4ea51c;position:static">TAB</span><span style="color:#8a1a8a;position:static">'</span> <span style="color:#1414d8;position:static">with</span> name <span style="color:#8a1a8a;position:static">'</span><span style="color:#4ea51c;position:static">einfügen</span><span style="color:#8a1a8a;position:static">'</span><span style="color:#7a7a8a;position:static">(</span><span style="color:#3a98e0;position:static">102</span><span style="color:#7a7a8a;position:static">)</span><span style="color:#8a1a8a;position:static">.</span></span>
<span class="t" style="left:4.5px;top:249.0px;font-size:12.4px;line-height:17px;color:#2a8c8c;">40</span>
<span class="t" style="left:47.5px;top:249.5px;font-size:13.33px;line-height:17px;color:#000;font-family:'Liberation Mono', monospace;">  <span style="color:#1414d8;position:static">elseif</span> code <span style="color:#8a1a8a;position:static">=</span> <span style="color:#8a1a8a;position:static">'</span><span style="color:#4ea51c;position:static">ANVO</span><span style="color:#8a1a8a;position:static">'</span><span style="color:#8a1a8a;position:static">.</span></span>
<span class="t" style="left:4.5px;top:266.0px;font-size:12.4px;line-height:17px;color:#2a8c8c;">41</span>
<span class="t" style="left:47.5px;top:266.5px;font-size:13.33px;line-height:17px;color:#000;font-family:'Liberation Mono', monospace;">    <span style="color:#1414d8;position:static">set</span> <span style="color:#1414d8;position:static">titlebar</span> <span style="color:#8a1a8a;position:static">'</span><span style="color:#4ea51c;position:static">TAB</span><span style="color:#8a1a8a;position:static">'</span> <span style="color:#1414d8;position:static">with</span> name <span style="color:#8a1a8a;position:static">'</span><span style="color:#4ea51c;position:static">einfügen</span><span style="color:#8a1a8a;position:static">'</span><span style="color:#7a7a8a;position:static">(</span><span style="color:#3a98e0;position:static">102</span><span style="color:#7a7a8a;position:static">)</span><span style="color:#8a1a8a;position:static">.</span></span>
<span class="t" style="left:4.5px;top:283.0px;font-size:12.4px;line-height:17px;color:#2a8c8c;">42</span>
<span class="t" style="left:47.5px;top:283.5px;font-size:13.33px;line-height:17px;color:#000;font-family:'Liberation Mono', monospace;">  <span style="color:#1414d8;position:static">elseif</span> code <span style="color:#8a1a8a;position:static">=</span> <span style="color:#8a1a8a;position:static">'</span><span style="color:#4ea51c;position:static">DELE</span><span style="color:#8a1a8a;position:static">'</span><span style="color:#8a1a8a;position:static">.</span></span>
<span class="t" style="left:4.5px;top:300.0px;font-size:12.4px;line-height:17px;color:#2a8c8c;">43</span>
<span class="t" style="left:47.5px;top:300.5px;font-size:13.33px;line-height:17px;color:#000;font-family:'Liberation Mono', monospace;">    <span style="color:#1414d8;position:static">set</span> <span style="color:#1414d8;position:static">titlebar</span> <span style="color:#8a1a8a;position:static">'</span><span style="color:#4ea51c;position:static">TAB</span><span style="color:#8a1a8a;position:static">'</span> <span style="color:#1414d8;position:static">with</span> name <span style="color:#8a1a8a;position:static">'</span><span style="color:#4ea51c;position:static">löschen</span><span style="color:#8a1a8a;position:static">'</span><span style="color:#7a7a8a;position:static">(</span><span style="color:#3a98e0;position:static">103</span><span style="color:#7a7a8a;position:static">)</span><span style="color:#8a1a8a;position:static">.</span></span>
<span class="t" style="left:4.5px;top:317.0px;font-size:12.4px;line-height:17px;color:#2a8c8c;">44</span>
<span class="t" style="left:47.5px;top:317.5px;font-size:13.33px;line-height:17px;color:#000;font-family:'Liberation Mono', monospace;">  <span style="color:#1414d8;position:static">endif</span><span style="color:#8a1a8a;position:static">.</span></span>
<span class="t" style="left:4.5px;top:334.0px;font-size:12.4px;line-height:17px;color:#2a8c8c;">45</span>
<span class="t" style="left:47.5px;top:334.5px;font-size:13.33px;line-height:17px;color:#000;font-family:'Liberation Mono', monospace;"><i style="color:#808080">* Existiert Prueftabelle?</i></span>
<span class="t" style="left:4.5px;top:351.0px;font-size:12.4px;line-height:17px;color:#2a8c8c;">46</span>
<span class="t" style="left:47.5px;top:351.5px;font-size:13.33px;line-height:17px;color:#000;font-family:'Liberation Mono', monospace;">  <span style="color:#1414d8;position:static">clear</span> tabix<span style="color:#8a1a8a;position:static">.</span></span>
<span class="t" style="left:4.5px;top:368.0px;font-size:12.4px;line-height:17px;color:#2a8c8c;">47</span>
<span class="t" style="left:47.5px;top:368.5px;font-size:13.33px;line-height:17px;color:#000;font-family:'Liberation Mono', monospace;">  <span style="color:#1414d8;position:static">loop</span> <span style="color:#1414d8;position:static">at</span> ntab <span style="color:#1414d8;position:static">where</span> <span style="color:#1414d8;position:static">not</span> checktable <span style="color:#1414d8;position:static">is</span> <span style="color:#1414d8;position:static">initial</span><span style="color:#8a1a8a;position:static">.</span></span>
<span class="t" style="left:4.5px;top:385.0px;font-size:12.4px;line-height:17px;color:#2a8c8c;">48</span>
<span class="t" style="left:47.5px;top:385.5px;font-size:13.33px;line-height:17px;color:#000;font-family:'Liberation Mono', monospace;">    tabix <span style="color:#8a1a8a;position:static">=</span> sy<span style="color:#8a1a8a;position:static">-</span>tabix<span style="color:#8a1a8a;position:static">.</span></span>
<span class="t" style="left:4.5px;top:402.0px;font-size:12.4px;line-height:17px;color:#2a8c8c;">49</span>
<span class="t" style="left:47.5px;top:402.5px;font-size:13.33px;line-height:17px;color:#000;font-family:'Liberation Mono', monospace;">    <span style="color:#1414d8;position:static">exit</span><span style="color:#8a1a8a;position:static">.</span></span>
<span class="t" style="left:4.5px;top:419.0px;font-size:12.4px;line-height:17px;color:#2a8c8c;">50</span>
<span class="t" style="left:47.5px;top:419.5px;font-size:13.33px;line-height:17px;color:#000;font-family:'Liberation Mono', monospace;">  <span style="color:#1414d8;position:static">endloop</span><span style="color:#8a1a8a;position:static">.</span></span>
<div style="left:34px;top:15.5px;width:8px;height:8.5px;background:#e6edf0;border:1px solid #666;box-sizing:border-box;"></div>
<div style="left:36px;top:19.5px;width:4px;height:1px;background:#333"></div>
<div style="left:34px;top:151.5px;width:8px;height:8.5px;background:#e6edf0;border:1px solid #666;box-sizing:border-box;"></div>
<div style="left:36px;top:155.5px;width:4px;height:1px;background:#333"></div>
<div style="left:34px;top:372.5px;width:8px;height:8.5px;background:#e6edf0;border:1px solid #666;box-sizing:border-box;"></div>
<div style="left:36px;top:376.5px;width:4px;height:1px;background:#333"></div>
<div style="left:35.5px;top:187.0px;width:5px;height:5px;border:1px solid #555;border-radius:50%;box-sizing:border-box;background:#e6edf0"></div>
<div style="left:35.5px;top:221.0px;width:5px;height:5px;border:1px solid #555;border-radius:50%;box-sizing:border-box;background:#e6edf0"></div>
<div style="left:35.5px;top:255.0px;width:5px;height:5px;border:1px solid #555;border-radius:50%;box-sizing:border-box;background:#e6edf0"></div>
<div style="left:35.5px;top:289.0px;width:5px;height:5px;border:1px solid #555;border-radius:50%;box-sizing:border-box;background:#e6edf0"></div>
<div style="left:38px;top:325.5px;width:4px;height:1px;background:#666"></div>
<div style="left:38px;top:427.5px;width:4px;height:1px;background:#666"></div>
<svg style="left:36px;top:-4.5px" width="6" height="7" viewBox="0 0 6 7"><path d="M1.5 0 V5.5 H6" fill="none" stroke="#777" stroke-width="1"/></svg>
<div style="left:75px;top:150px;width:124.5px;height:16.5px;border:1px solid #e8192c;box-sizing:border-box;"></div>
</div>
<div style="left:482px;top:468px;width:214px;height:260px;background:#fff;"></div>
<div style="left:468px;top:728px;width:228px;height:153px;background:#fff;"></div>
<div style="left:0px;top:880.5px;width:12px;height:20px;background:#fff;"></div>
<div class="p" style="left:482px;top:468px;width:329px;height:154px;background:#fff;">
<div style="left:26px;top:0px;width:303px;height:2px;background:#c9d8ec;"></div>
<div style="left:26px;top:0px;width:4px;height:132.5px;background:#c9d8ec;"></div>
<div style="left:43px;top:14px;width:95px;height:19.5px;background:#0a9bdc;"></div>
<span class="t" style="left:59px;top:16.5px;font-size:12.4px;line-height:16px;color:#fff;">Variablen 1</span>
<div style="left:138px;top:15.600000000000023px;width:89.5px;height:17.4px;background:#fff;border:1px solid #c2c2c2;box-sizing:border-box;border-bottom:2px solid #cccccc;"></div>
<span class="t" style="left:157px;top:16.5px;font-size:12.4px;line-height:16px;color:#111;">Variablen 2</span>
<div style="left:226.5px;top:15.600000000000023px;width:62.0px;height:17.4px;background:#fff;border:1px solid #c2c2c2;box-sizing:border-box;border-bottom:2px solid #cccccc;"></div>
<span class="t" style="left:246px;top:16.5px;font-size:12.4px;line-height:16px;color:#111;">Locals</span>
<div style="left:287.5px;top:15.600000000000023px;width:61.5px;height:17.4px;background:#fff;border:1px solid #c2c2c2;box-sizing:border-box;border-bottom:2px solid #cccccc;"></div>
<span class="t" style="left:307px;top:16.5px;font-size:12.4px;line-height:16px;color:#111;">Globals</span>
<div style="left:32px;top:38.5px;width:300px;height:2px;background:#2b5f8f"></div>
<svg style="left:86px;top:34.60000000000002px" width="9" height="6" viewBox="0 0 9 6"><path d="M0 6 L4.5 1 L9 6 Z" fill="#fff"/><path d="M0 5 L4.5 1 L9 5" fill="none" stroke="#2b5f8f" stroke-width="1.5"/></svg>
<svg style="left:41.5px;top:58.5px" width="14" height="16" viewBox="0 0 14 16"><path d="M0.5 2.5 H13.5 M4.5 2.5 V0.7 H9.5 V2.5" fill="none" stroke="#555" stroke-width="1.2"/><path d="M1.8 4 H12.2 L11.2 15.3 H2.8 Z" fill="#fff" stroke="#555" stroke-width="1.1"/><path d="M4.8 5.5 V13.5 M7 5.5 V13.5 M9.2 5.5 V13.5" stroke="#555" stroke-width="0.9"/></svg>
<svg style="left:61px;top:58.5px" width="15" height="16" viewBox="0 0 15 16"><path d="M9.5 0.6 H0.6 V15 H6" fill="none" stroke="#555" stroke-width="1.1"/><path d="M2.5 4 H8 M2.5 7 H7 M2.5 10 H6" stroke="#0b8a3e" stroke-width="1.5"/><path d="M9 7 L14 12 H11.5 L12.8 15 L11.3 15.6 L10 12.7 L9 14.2 Z" fill="#444"/></svg>
<svg style="left:82px;top:58.5px" width="15" height="16" viewBox="0 0 15 16"><path d="M9.5 0.6 H0.6 V15 H6" fill="none" stroke="#555" stroke-width="1.1"/><path d="M2.5 4 H8 M2.5 7 H7 M2.5 10 H6" stroke="#666" stroke-width="1.5"/><path d="M9 7 L14 12 H11.5 L12.8 15 L11.3 15.6 L10 12.7 L9 14.2 Z" fill="#444"/></svg>
<svg style="left:103px;top:58.5px" width="15" height="16" viewBox="0 0 15 16"><rect x="0.6" y="0.6" width="10" height="13" fill="#fff" stroke="#555" stroke-width="1.1"/><rect x="0.6" y="0.6" width="10" height="3" fill="#d8232a"/><circle cx="10.5" cy="12" r="3.5" fill="#e0001e"/><rect x="8.5" y="11.3" width="4" height="1.4" fill="#fff"/></svg>
<svg style="left:131px;top:58.5px" width="16" height="16" viewBox="0 0 16 16"><path d="M2 0 H5 V3 H7 L3.5 6 L0 3 H2 Z M11 0 H14 V3 H16 L12.5 6 L9 3 H11 Z" fill="#444"/><rect x="0.5" y="8" width="6.5" height="6" fill="#f0ab00"/><rect x="9" y="8" width="6.5" height="6" fill="#d8232a"/></svg>
<div style="left:130px;top:76.0px;width:18px;height:1px;background:#cfcfcf"></div>
<svg style="left:160px;top:58.5px" width="15" height="16" viewBox="0 0 15 16"><rect x="0" y="3" width="6" height="7" fill="#f0ab00"/><path d="M8 3 L12 0.5 M8 6.5 H13.5 M8 10 L12 14 M12 0.5 L10.3 0.7 M12 0.5 L11.6 2.2 M13.5 6.5 L12 5.3 M13.5 6.5 L12 7.7 M12 14 L10.2 13.6 M12 14 L11.8 12.2" stroke="#555" stroke-width="1" fill="none"/></svg>
<div style="left:158px;top:76.0px;width:18px;height:1px;background:#cfcfcf"></div>
<svg style="left:187px;top:57.5px" width="17" height="17" viewBox="0 0 17 17"><path d="M0 0 H8 L4 5 Z" fill="#0b8a3e"/><path d="M4 5 V9 H7" fill="none" stroke="#555" stroke-width="1"/><rect x="6.5" y="5.5" width="10" height="10.5" fill="#fff" stroke="#555" stroke-width="1.1"/><rect x="8.2" y="8.5" width="6.6" height="5.6" fill="#666"/></svg>
<div style="left:185px;top:76.0px;width:20px;height:1px;background:#cfcfcf"></div>
<div style="left:38px;top:79px;width:291px;height:18px;background:#e5e5e5;"></div>
<div style="left:38px;top:78.5px;width:291px;height:1px;background:#d0d0d0"></div>
<div style="left:38px;top:79px;width:1px;height:54px;background:#cfcfcf"></div>
<div style="left:56.5px;top:80px;width:1px;height:17px;background:#c6c6c6"></div>
<div style="left:83.5px;top:80px;width:1px;height:17px;background:#c6c6c6"></div>
<div style="left:229px;top:80px;width:1px;height:17px;background:#c6c6c6"></div>
<div style="left:254.5px;top:80px;width:1px;height:17px;background:#c6c6c6"></div>
<span class="t" style="left:60px;top:80.5px;font-size:12.4px;line-height:16px;color:#111;">S...</span>
<span class="t" style="left:87px;top:80.5px;font-size:12.4px;line-height:16px;color:#111;">Variable</span>
<span class="t" style="left:231px;top:80.5px;font-size:12.4px;line-height:16px;color:#111;">W..</span>
<span class="t" style="left:257px;top:80.5px;font-size:12.4px;line-height:16px;color:#111;">Wert</span>
<div style="left:312px;top:97px;width:17px;height:35.5px;background:#e9edf1;"></div>
<div style="left:312px;top:97px;width:17px;height:10.3px;background:#e5e5e5;"></div>
<div style="left:312px;top:107.20000000000005px;width:17px;height:1px;background:#c9c9c9"></div>
<div style="left:325px;top:133px;width:4px;height:20.5px;background:#eef0f2;"></div>
<div style="left:325px;top:141px;width:4px;height:1px;background:#d0d0d0"></div>
<div class="p" style="left:39.5px;top:97px;width:272px;height:35.5px;background:#e5e5e5">
<div style="left:0px;top:0px;width:272px;height:10px;background:#e5e5e5;"></div>
<span class="t" style="left:30.5px;top:-8.0px;font-size:12.4px;line-height:16px;color:#111;">S...</span>
<span class="t" style="left:57.5px;top:-8.0px;font-size:12.4px;line-height:16px;color:#111;">Variable</span>
<span class="t" style="left:201.5px;top:-8.0px;font-size:12.4px;line-height:16px;color:#111;">W..</span>
<span class="t" style="left:227.5px;top:-8.0px;font-size:12.4px;line-height:16px;color:#111;">Wert</span>
<div style="left:11.5px;top:9.5px;width:260px;height:1px;background:#c6c6c6"></div>
<div style="left:0.0px;top:0px;width:11px;height:35.5px;background:#e9e9e9;"></div>
<div style="left:11.0px;top:10px;width:16px;height:25.5px;background:#e4e6e8;"></div>
<div style="left:0.0px;top:2.5px;width:10px;height:1px;background:#cfcfcf"></div>
<div style="left:0.0px;top:23px;width:10px;height:1px;background:#cfcfcf"></div>
<div style="left:27.5px;top:10px;width:26.5px;height:25.5px;background:#e9edf1;"></div>
<div style="left:54.0px;top:10px;width:145px;height:25.5px;background:#fff;"></div>
<div style="left:199.0px;top:10px;width:26px;height:25.5px;background:#e4e8ec;"></div>
<div style="left:225.0px;top:10px;width:60px;height:25.5px;background:#e9edf1;"></div>
<div style="left:11.5px;top:31px;width:260px;height:1px;background:#c9c9c9"></div>
<div style="left:27.0px;top:0px;width:1px;height:35.5px;background:#c9c9c9"></div>
<div style="left:53.5px;top:0px;width:1px;height:35.5px;background:#c9c9c9"></div>
<div style="left:199.0px;top:0px;width:1px;height:35.5px;background:#c9c9c9"></div>
<div style="left:225.0px;top:0px;width:1px;height:35.5px;background:#c9c9c9"></div>
<span class="t" style="left:54.5px;top:13.5px;font-size:13.0px;line-height:16px;color:#111;font-family:'Liberation Mono', monospace;letter-spacing:-1px">CODE</span>
<span class="t" style="left:225.5px;top:13.5px;font-size:13.0px;line-height:16px;color:#111;font-family:'Liberation Mono', monospace;letter-spacing:-1px">EDIT</span>
<div style="left:225.5px;top:14px;width:1.2px;height:13px;background:#000"></div>
<svg style="left:222.0px;top:8px" width="8" height="26" viewBox="0 0 8 26"><path d="M6 0.8 H0.8 V6 M0.8 19 V24.4 H6" fill="none" stroke="#c0161c" stroke-width="1.3"/></svg>
<svg style="left:211.5px;top:0px" width="12" height="4" viewBox="0 0 12 4"><path d="M0 0.8 H11 V3" fill="none" stroke="#c0161c" stroke-width="1.3"/></svg>
</div>
<div style="left:39px;top:96.5px;width:273px;height:42px;border:1px solid #e8192c;box-sizing:border-box;"></div>
</div>
<span class="t" style="left:495.5px;top:577.0px;font-size:12.3px;line-height:16px;color:#f0202a;">4</span>
<div class="p" style="left:873px;top:458px;width:48px;height:313.5px;background:#fff;">
<div style="left:0px;top:0.5px;width:48px;height:16px;background:#fff;"></div>
<div style="left:0px;top:0.4px;width:48px;height:1px;background:#c4c4c4"></div>
<div style="left:0px;top:16.4px;width:48px;height:1.8px;background:#c8c8c8"></div>
<div style="left:24.3px;top:0.5px;width:1px;height:16px;background:#bdbdbd"></div>
<span class="t" style="left:-6.3px;top:1.1999999999999993px;font-size:12.4px;line-height:16px;color:#111;">cals</span>
<span class="t" style="left:44.3px;top:1.1999999999999993px;font-size:12.4px;line-height:16px;color:#111;">A</span>
<div style="left:0px;top:22.6px;width:48px;height:2.4px;background:#2a6496"></div>
<div style="left:0px;top:60.4px;width:48px;height:1px;background:#d8d8d8"></div>
<div style="left:0px;top:63px;width:48px;height:21px;background:#e4e4e4;"></div>
<div style="left:0px;top:84px;width:48px;height:230px;background:#e9edf1;"></div>
<div style="left:0px;top:83px;width:48px;height:1px;background:#c9c9c9"></div>
<div style="left:0px;top:104px;width:48px;height:1px;background:#c9c9c9"></div>
<div style="left:0px;top:125.5px;width:48px;height:1px;background:#c9c9c9"></div>
<div style="left:0px;top:146.5px;width:48px;height:1px;background:#c9c9c9"></div>
<div style="left:0px;top:167.5px;width:48px;height:1px;background:#c9c9c9"></div>
<div style="left:0px;top:188.5px;width:48px;height:1px;background:#c9c9c9"></div>
<div style="left:0px;top:209.5px;width:48px;height:1px;background:#c9c9c9"></div>
<div style="left:0px;top:230px;width:48px;height:1px;background:#c9c9c9"></div>
<div style="left:0px;top:251px;width:48px;height:1px;background:#c9c9c9"></div>
<div style="left:0px;top:272px;width:48px;height:1px;background:#c9c9c9"></div>
<div style="left:0px;top:293px;width:48px;height:1px;background:#c9c9c9"></div>
<div style="left:0px;top:83px;width:3px;height:1px;background:#aaa"></div>
<div style="left:0px;top:104px;width:3px;height:1px;background:#aaa"></div>
</div>
<span class="t" style="left:878px;top:491.0px;font-size:12.3px;line-height:16px;color:#f0202a;">5</span>
<div class="p" style="left:921px;top:461px;width:319px;height:337.5px;background:#fff;">
<div style="left:3px;top:50px;width:316px;height:287.5px;background:linear-gradient(rgba(255,255,255,.75),rgba(255,255,255,.1) 55%,rgba(255,255,255,0)),repeating-linear-gradient(135deg,#ffffff 0,#ffffff 2.2px,#e6f1f6 2.2px,#e6f1f6 3.5px);"></div>
<div style="left:3px;top:0px;width:316px;height:52px;background:#fdfdfd;"></div>
<div style="left:3px;top:0px;width:316px;height:1px;background:#d8d8d8"></div>
<span class="t" style="left:7px;top:11.5px;font-size:12.0px;line-height:16px;color:#1a1aff;transform:scaleX(0.926);transform-origin:0 0;">CLIENT</span>
<div style="left:5px;top:28.5px;width:106px;height:1px;background:#b4b4b4"></div>
<div style="left:110.20000000000005px;top:9.1px;width:26px;height:19.6px;background:#e8e8e8;border:1px solid #c2c2c2;box-sizing:border-box;"></div>
<span class="t" style="left:113.5px;top:11.5px;font-size:11.4px;line-height:16px;color:#111;font-family:'Liberation Mono', monospace;">100</span>
<span class="t" style="left:7.2999999999999545px;top:33.0px;font-size:11.6px;line-height:16px;color:#1a1aff;font-family:'Liberation Mono', monospace;">GUID</span>
<div style="left:5px;top:50px;width:106px;height:1px;background:#b4b4b4"></div>
<div style="left:110.20000000000005px;top:30.6px;width:230px;height:19.6px;background:#e8e8e8;border:1px solid #c2c2c2;box-sizing:border-box;"></div>
<span class="t" style="left:113.5px;top:33.0px;font-size:11.4px;line-height:16px;color:#111;font-family:'Liberation Mono', monospace;">005056978B471EEB98A830357B22F571</span>
<span class="t" style="left:7px;top:77.5px;font-size:12.0px;line-height:16px;color:#111;transform:scaleX(0.880);transform-origin:0 0;">SENDER</span>
<div style="left:5px;top:94.5px;width:106px;height:1px;background:#b4b4b4"></div>
<div style="left:110.5px;top:74.70000000000005px;width:230px;height:20.3px;background:#fff;border:1px solid #1a80d4;box-sizing:border-box;"></div>
<div class="p" style="left:113px;top:86.60000000000002px;width:102px;height:4.2px"><span class="t" style="left:0.5px;top:-9.1px;font-size:12.5px;line-height:16px;color:#222">Peter.Schrank@bc</span></div>
<div style="left:113.5px;top:78.5px;width:1.3px;height:3.5px;background:#333;"></div>
<div class="p" style="left:228px;top:79.29999999999995px;width:9.5px;height:2.8px"><span class="t" style="left:0;top:-2px;font-size:12.5px;line-height:16px;color:#333">fil</span></div>
<div class="p" style="left:241px;top:77px;width:40px;height:16px"><span class="t" style="left:-3.4px;top:0.5px;font-size:12.6px;line-height:16px;color:#111;letter-spacing:0.35px">n.com</span></div>
<svg style="left:106.5px;top:72.5px" width="8" height="25" viewBox="0 0 8 25"><path d="M7 0.8 H0.8 V6 M0.8 18 V23.6 H7" fill="none" stroke="#c0161c" stroke-width="1.3"/></svg>
<span class="t" style="left:7px;top:99.5px;font-size:12.0px;line-height:16px;color:#111;transform:scaleX(0.882);transform-origin:0 0;">SUBJECT</span>
<div style="left:5px;top:116.5px;width:106px;height:1px;background:#b4b4b4"></div>
<span class="t" style="left:113.5px;top:99.5px;font-size:12.5px;line-height:16px;color:#111;">WG: rechnung</span>
<div style="left:110.5px;top:116px;width:210px;height:1px;background:#b4b4b4"></div>
<div style="left:110.5px;top:97px;width:210px;height:1px;background:#c8c8c8"></div>
<div style="left:110px;top:97px;width:1px;height:19.5px;background:#c8c8c8"></div>
<span class="t" style="left:7px;top:121.5px;font-size:12.0px;line-height:16px;color:#111;transform:scaleX(0.877);transform-origin:0 0;">BUKRS PROP</span>
<div style="left:5px;top:138.5px;width:106px;height:1px;background:#b4b4b4"></div>
<div style="left:110.20000000000005px;top:119.1px;width:33px;height:19.6px;background:#fff;border:1px solid #b8b8b8;box-sizing:border-box;"></div>
<span class="t" style="left:113.5px;top:121.5px;font-size:11.4px;line-height:16px;color:#111;font-family:'Liberation Mono', monospace;">0650</span>
<span class="t" style="left:7px;top:143.5px;font-size:12.0px;line-height:16px;color:#111;transform:scaleX(0.913);transform-origin:0 0;">RECEIVED ON</span>
<div style="left:5px;top:160.5px;width:106px;height:1px;background:#b4b4b4"></div>
<div style="left:110.20000000000005px;top:141.1px;width:75px;height:19.6px;background:#fff;border:1px solid #b8b8b8;box-sizing:border-box;"></div>
<span class="t" style="left:113.5px;top:143.5px;font-size:11.4px;line-height:16px;color:#111;font-family:'Liberation Mono', monospace;">28.01.2021</span>
<span class="t" style="left:7px;top:165.5px;font-size:12.0px;line-height:16px;color:#111;transform:scaleX(0.949);transform-origin:0 0;">RECEIVED AT</span>
<div style="left:5px;top:182.5px;width:106px;height:1px;background:#b4b4b4"></div>
<div style="left:110.20000000000005px;top:163.1px;width:61px;height:19.6px;background:#fff;border:1px solid #b8b8b8;box-sizing:border-box;"></div>
<span class="t" style="left:113.5px;top:165.5px;font-size:11.4px;line-height:16px;color:#111;font-family:'Liberation Mono', monospace;">09:19:14</span>
<span class="t" style="left:7px;top:187.5px;font-size:12.0px;line-height:16px;color:#111;transform:scaleX(0.966);transform-origin:0 0;">ATTACHMENTS</span>
<div style="left:5px;top:204.5px;width:106px;height:1px;background:#b4b4b4"></div>
<div style="left:110.20000000000005px;top:185.1px;width:12.5px;height:19.6px;background:#fff;border:1px solid #b8b8b8;box-sizing:border-box;"></div>
<span class="t" style="left:113.5px;top:187.5px;font-size:11.4px;line-height:16px;color:#111;font-family:'Liberation Mono', monospace;">X</span>
<span class="t" style="left:7px;top:209.5px;font-size:12.0px;line-height:16px;color:#111;transform:scaleX(0.928);transform-origin:0 0;">KREDITKARTE</span>
<div style="left:5px;top:226.5px;width:106px;height:1px;background:#b4b4b4"></div>
<div style="left:110.20000000000005px;top:207.1px;width:12.5px;height:19.6px;background:#fff;border:1px solid #b8b8b8;box-sizing:border-box;"></div>
<span class="t" style="left:7px;top:231.5px;font-size:12.0px;line-height:16px;color:#111;">STATUS</span>
<div style="left:5px;top:248.5px;width:106px;height:1px;background:#b4b4b4"></div>
<div style="left:110.20000000000005px;top:229.1px;width:12.5px;height:19.6px;background:#fff;border:1px solid #b8b8b8;box-sizing:border-box;"></div>
<span class="t" style="left:113.5px;top:231.5px;font-size:11.4px;line-height:16px;color:#111;font-family:'Liberation Mono', monospace;">D</span>
<span class="t" style="left:7px;top:253.5px;font-size:12.0px;line-height:16px;color:#111;transform:scaleX(0.853);transform-origin:0 0;">BUKRS</span>
<div style="left:5px;top:270.5px;width:106px;height:1px;background:#b4b4b4"></div>
<div style="left:110.20000000000005px;top:251.1px;width:33px;height:19.6px;background:#fff;border:1px solid #b8b8b8;box-sizing:border-box;"></div>
<span class="t" style="left:113.5px;top:253.5px;font-size:11.4px;line-height:16px;color:#111;font-family:'Liberation Mono', monospace;">0650</span>
<span class="t" style="left:7px;top:275.5px;font-size:12.0px;line-height:16px;color:#111;transform:scaleX(0.868);transform-origin:0 0;">BELNR</span>
<div style="left:5px;top:292.5px;width:106px;height:1px;background:#b4b4b4"></div>
<div style="left:110.20000000000005px;top:273.1px;width:75px;height:19.6px;background:#fff;border:1px solid #b8b8b8;box-sizing:border-box;"></div>
<span class="t" style="left:113.5px;top:275.5px;font-size:11.4px;line-height:16px;color:#111;font-family:'Liberation Mono', monospace;">1400004</span>
<span class="t" style="left:7px;top:297.5px;font-size:12.0px;line-height:16px;color:#111;transform:scaleX(0.879);transform-origin:0 0;">GJAHR</span>
<div style="left:5px;top:314.5px;width:106px;height:1px;background:#b4b4b4"></div>
<div style="left:110.20000000000005px;top:295.1px;width:33px;height:19.6px;background:#fff;border:1px solid #b8b8b8;box-sizing:border-box;"></div>
<span class="t" style="left:113.5px;top:297.5px;font-size:11.4px;line-height:16px;color:#111;font-family:'Liberation Mono', monospace;">2020</span>
</div>
<span class="t" style="left:1246px;top:538.7px;font-size:12.3px;line-height:16px;color:#f0202a;">6</span>
<div style="left:1263px;top:520px;width:82px;height:77.5px;background:#fff;border:1px solid #ee1c25;box-sizing:border-box;"></div>
<div class="p" style="left:1264px;top:518px;width:53px;height:70.5px;background:#f2f2f2;">
<div style="left:0px;top:0px;width:53px;height:5.5px;background:#f7f9fa;"></div>
<div style="left:0px;top:4.5px;width:53px;height:3px;background:linear-gradient(#e4e4e4,#c4c4c4 55%,#e6e6e6);"></div>
<svg style="left:-0.5px;top:21.5px" width="15" height="17.5" viewBox="0 0 15 17.5"><path d="M7.05 0.8 L1.2 8.75 L7.05 16.7 M14 0.8 L8.35 8.75 L14 16.7" fill="none" stroke="#666" stroke-width="1.9"/></svg>
<svg style="left:22px;top:21px" width="19" height="19" viewBox="0 0 19 19"><g transform="scale(1.0)"><path d="M2 0 H18 Q19 0 19 1 V18 Q19 19 18 19 H1 Q0 19 0 18 V2 Z" fill="#666"/><path d="M4 0 V8 H15.5 V0 M4 19 V13.5 H15.5 V19" fill="none" stroke="#f2f2f2" stroke-width="1.1"/><rect x="7" y="15" width="2.6" height="3" fill="#f2f2f2"/></g></svg>
<div style="left:0px;top:46px;width:53px;height:1px;background:#dcdcdc"></div>
<div style="left:0px;top:47px;width:53px;height:23.5px;background:#fafafa;"></div>
<span class="t" style="left:0.5px;top:52.0px;font-size:16.7px;line-height:20px;color:#555;letter-spacing:-0.1px">ändern</span>
</div>
<div style="left:1263px;top:520px;width:82px;height:1px;background:#ee1c25"></div>
</body></html>
